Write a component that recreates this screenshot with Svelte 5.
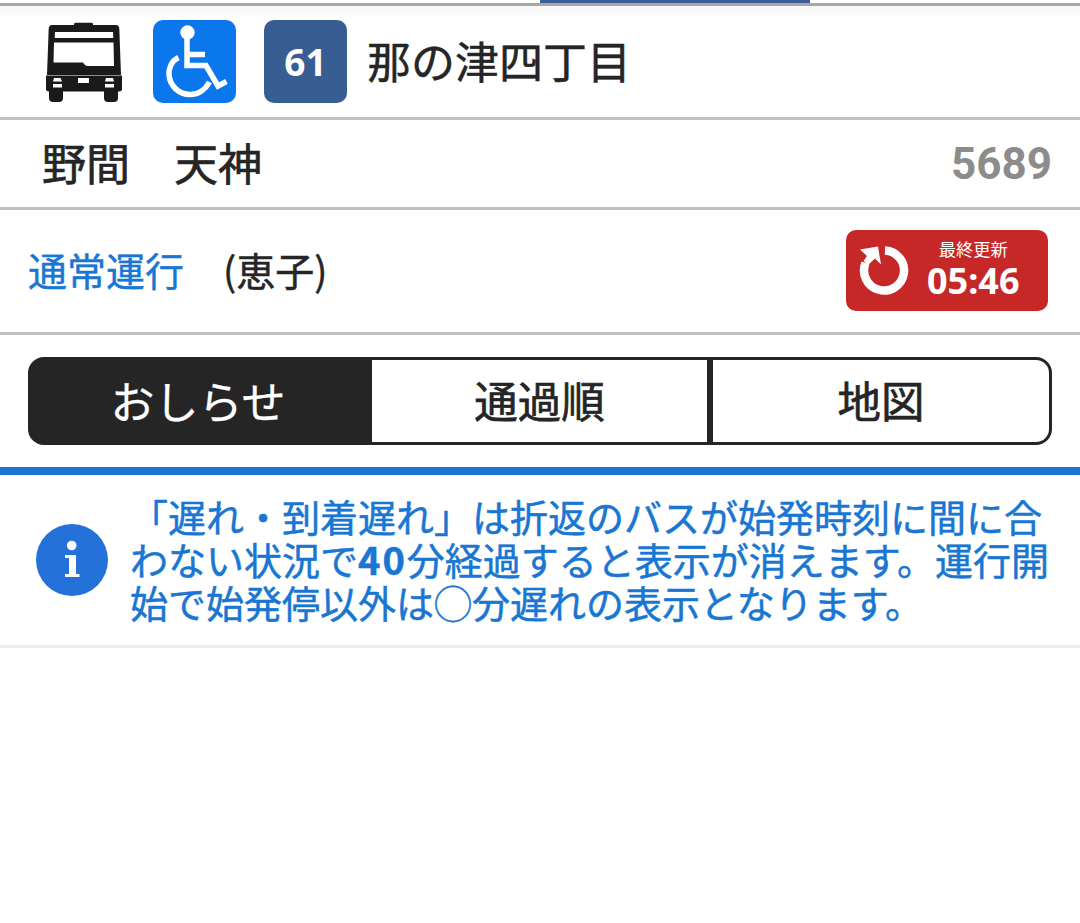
<script>
  const tabs = [
    { label: "おしらせ", active: true },
    { label: "通過順", active: false },
    { label: "地図", active: false },
  ];
</script>

<div class="page">
  <div class="topbar"><div class="toptab"></div></div>

  <div class="row head">
    <svg class="bus" viewBox="0 0 80 84" width="80" height="84" aria-hidden="true">
      <path fill="#1a1a1a" d="M30 3 Q30 1.700 32 1.700 H47 Q49 1.700 49 3 L49 4 H72 Q75 4 75.300 7.500 L77 54 H3 L4.700 7.500 Q5 4 8 4 H30 Z" />
      <path fill="#1a1a1a" d="M2 54.500 H78 V68 Q78 70.500 75 70.500 H5 Q2 70.500 2 68 Z" />
      <path fill="#1a1a1a" d="M5 70 H19 V77 Q19 81 15 81 H9 Q5 81 5 77 Z M60 70 H74 V77 Q74 81 70 81 H64 Q60 81 60 77 Z" />
      <path fill="#fff" d="M11 11 H69 L69.300 17 H10.700 Z" />
      <path fill="#fff" d="M10 21.500 H69.500 L70 45 H44 Q41 45 39 41.500 H9.500 Z" />
      <path fill="#fff" d="M10 57 H16.500 L18 60.500 H9 Z M9 63 H18 V66.500 H9 Z M34 57 H45 V62 H34 Z M62 57 H69 L70 60.500 H61 Z M61 63 H70 V66.500 H61 Z" />
    </svg>

    <div class="tile access">
      <svg viewBox="0 0 83 83" width="83" height="83" aria-hidden="true">
        <circle cx="34.500" cy="12.500" r="7.200" fill="#fff" />
        <path fill="none" stroke="#fff" stroke-width="5.500" d="M34 14 V45.500 H53 L65 66 L73.500 61.500 M34 34.500 H52" />
        <path fill="none" stroke="#fff" stroke-width="5.500" d="M25.500 37.500 C18 41 15.500 49 16 55 C17 66 26 74.500 37 74.500 C46 74.500 53 68.500 56.500 62" />
      </svg>
    </div>

    <div class="tile route">61</div>
    <div class="stop">那の津四丁目</div>
  </div>

  <div class="row names">
    <div class="name">野間　天神</div>
    <div class="code">5689</div>
  </div>

  <div class="row status">
    <span class="state">通常運行</span>
    <span class="driver">(恵子)</span>
    <div class="refresh">
      <svg viewBox="0 0 52 52" width="52" height="52" aria-hidden="true">
        <path fill="none" stroke="#fff" stroke-width="8.500" d="M27 6.500 A20 20 0 1 1 7.500 19" />
        <path fill="#fff" d="M2 5.500 L20 2.500 L23 20.500 L17 14.500 L10 21 L5.500 17 L9 12 Z" />
      </svg>
      <div class="stamp">
        <span class="stamp-label">最終更新</span>
        <span class="stamp-time">05:46</span>
      </div>
    </div>
  </div>

  <div class="tabs">
    {#each tabs as t}
      <div class="tab" class:active={t.active}>{t.label}</div>
    {/each}
  </div>

  <div class="notice">
    <svg class="info" viewBox="0 0 72 72" width="72" height="72" aria-hidden="true">
      <circle cx="36" cy="36" r="36" fill="#2371d9" />
      <circle cx="35.700" cy="21.500" r="4.800" fill="#fff" />
      <path fill="#fff" d="M29 31 H40 V50 H43.500 V53 H29 V50 H33 V34 H29 Z" />
    </svg>
    <p class="msg">「遅れ・到着遅れ」は折返のバスが始発時刻に間に合わない状況で<b>40</b>分経過すると表示が消えます。運行開始で始発停以外は◯分遅れの表示となります。</p>
  </div>
</div>

<style>
  :global(body) {
    margin: 0;
    background: #fff;
  }
  .page {
    width: 1080px;
    font-family: "Noto Sans CJK JP", "Noto Sans", sans-serif;
    color: #252525;
  }
  .topbar {
    height: 3px;
    border-bottom: 3px solid #a8a8a8;
  }
  .toptab {
    width: 270px;
    height: 3px;
    margin-left: 540px;
    background: #3a5f94;
  }
  .row {
    display: flex;
    align-items: center;
    border-bottom: 3px solid #c0c0c0;
    box-sizing: border-box;
  }
  .head {
    height: 114px;
    padding: 0 0 0 44px;
    background: linear-gradient(#f7f7f7, #fff 14px);
  }
  .bus {
    flex: none;
    margin-top: 2px;
  }
  .tile {
    flex: none;
    width: 83px;
    height: 83px;
    border-radius: 10px;
    margin-top: -1px;
  }
  .access {
    margin-left: 29px;
    background: #0a78ec;
  }
  .access svg {
    display: block;
  }
  .route {
    margin-left: 28px;
    background: #385d92;
    color: #fff;
    font-family: "Noto Sans", sans-serif;
    font-size: 37px;
    font-weight: 700;
    line-height: 83px;
    text-align: center;
  }
  .stop {
    margin-left: 20px;
    margin-top: -4px;
    font-size: 44px;
    line-height: 60px;
    -webkit-text-stroke: 0.5px #252525;
  }
  .names {
    height: 90px;
    padding: 0 28px 0 42px;
    justify-content: space-between;
  }
  .name {
    font-size: 44px;
    line-height: 60px;
    margin-top: -4px;
    -webkit-text-stroke: 0.7px #252525;
  }
  .code {
    font-family: Roboto, sans-serif;
    font-size: 44px;
    font-weight: 700;
    color: #8c8c8c;
    line-height: 60px;
    margin-top: 1px;
  }
  .status {
    height: 125px;
    padding: 0 32px 0 28px;
  }
  .state {
    font-size: 39px;
    color: #1976d2;
    line-height: 56px;
    margin-top: -4px;
    -webkit-text-stroke: 0.4px #1976d2;
  }
  .driver {
    margin-left: 39px;
    font-size: 39px;
    line-height: 56px;
    margin-top: -4px;
    -webkit-text-stroke: 0.5px #252525;
  }
  .refresh {
    margin-left: auto;
    margin-top: -2px;
    width: 202px;
    height: 81px;
    box-sizing: border-box;
    background: #c62828;
    border-radius: 10px;
    color: #fff;
    display: flex;
    align-items: center;
    padding-left: 12px;
  }
  .refresh svg {
    flex: none;
  }
  .stamp {
    display: flex;
    flex-direction: column;
    align-items: center;
    margin-left: 17px;
  }
  .stamp-label {
    font-size: 17.300px;
    line-height: 22px;
  }
  .stamp-time {
    font-family: "Noto Sans", sans-serif;
    font-size: 36px;
    font-weight: 700;
    line-height: 42px;
  }
  .tabs {
    display: grid;
    grid-template-columns: 341px 341px 1fr;
    margin: 22px 28px 0;
    height: 88px;
    box-sizing: border-box;
    border: 3px solid #252525;
    border-radius: 16px;
    overflow: hidden;
    background: #252525;
  }
  .tab {
    font-size: 43.500px;
    line-height: 80px;
    text-align: center;
    background: #fff;
    -webkit-text-stroke: 0.7px #252525;
  }
  .tab:nth-child(2) {
    border-right: 6px solid #252525;
  }
  .tab.active {
    background: #252525;
    color: #fff;
    font-size: 44px;
    padding-right: 7px;
    -webkit-text-stroke: 0.3px #fff;
  }
  .notice {
    margin-top: 22px;
    border-top: 8px solid #1976d2;
    border-bottom: 3px solid #eeeeee;
    height: 170px;
    display: flex;
    align-items: center;
    padding-left: 36px;
  }
  .info {
    flex: none;
  }
  .msg {
    margin: -4px 0 0 22px;
    width: 925px;
    font-size: 38px;
    line-height: 43px;
    color: #1976d2;
    -webkit-text-stroke: 0.5px #1976d2;
  }
  .msg b {
    font-weight: 700;
    letter-spacing: 2px;
  }
</style>
